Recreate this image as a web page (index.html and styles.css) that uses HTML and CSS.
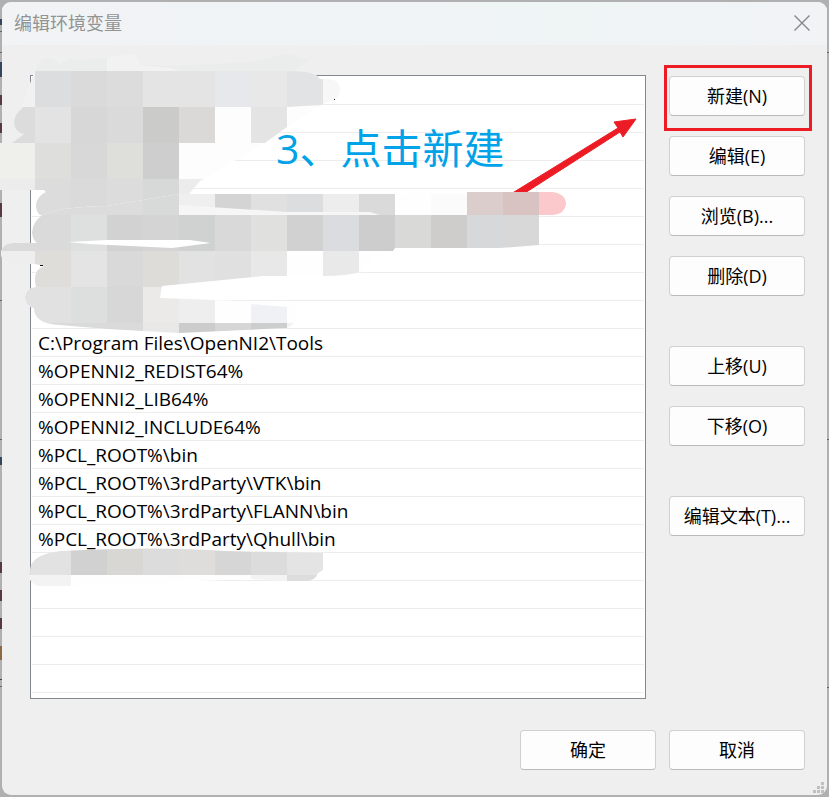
FILE: index.html
```html
<!DOCTYPE html>
<html lang="zh-CN">
<head>
    <meta charset="UTF-8">
    <meta name="viewport" content="width=device-width, initial-scale=1.0">
    <title>编辑环境变量</title>
    <link rel="stylesheet" href="styles.css">
</head>
<body>
    <div class="dialog">
        <header class="title-bar">
            <h1>编辑环境变量</h1>
            <button class="close" aria-label="关闭">
                <svg width="16" height="16" viewBox="0 0 16 16"><path d="M.5 .5 15.5 15.5M15.5 .5 .5 15.5" fill="none" stroke="#858788" stroke-width="1.4"/></svg>
            </button>
        </header>

        <main class="content">
            <ul class="path-list">
                <li></li>
                <li></li>
                <li></li>
                <li></li>
                <li></li>
                <li></li>
                <li></li>
                <li></li>
                <li></li>
                <li>C:\Program Files\OpenNI2\Tools</li>
                <li>%OPENNI2_REDIST64%</li>
                <li>%OPENNI2_LIB64%</li>
                <li>%OPENNI2_INCLUDE64%</li>
                <li>%PCL_ROOT%\bin</li>
                <li>%PCL_ROOT%\3rdParty\VTK\bin</li>
                <li>%PCL_ROOT%\3rdParty\FLANN\bin</li>
                <li>%PCL_ROOT%\3rdParty\Qhull\bin</li>
                <li></li>
                <li></li>
                <li></li>
                <li></li>
                <li></li>
            </ul>

            <div class="actions">
                <div class="group">
                    <div class="highlight"><button class="btn">新建(N)</button></div>
                    <button class="btn">编辑(E)</button>
                    <button class="btn">浏览(B)...</button>
                    <button class="btn">删除(D)</button>
                </div>
                <div class="group">
                    <button class="btn">上移(U)</button>
                    <button class="btn">下移(O)</button>
                </div>
                <div class="group">
                    <button class="btn">编辑文本(T)...</button>
                </div>
            </div>
        </main>

        <footer class="footer">
            <button class="btn">确定</button>
            <button class="btn">取消</button>
        </footer>

        <svg class="grip" width="11" height="11" viewBox="0 0 11 11" fill="#bfbfbf">
            <path d="M8 0h3v3H8zM4 4h3v3H4zM8 4h3v3H8zM0 8h3v3H0zM4 8h3v3H4zM8 8h3v3H8z"/>
        </svg>
    </div>

    <!-- marks drawn on top of the dialog -->
    <svg class="markup" width="829" height="797" viewBox="0 0 829 797">
        <defs>
            <clipPath id="blob-top">
                <path d="M35 71H290Q314 70 320 79H328Q340 80 340 90 340 99 330 101L321 105 287 127 265 143 200 181 189 194 179 215H40Q36 212 36 205 37 196 46 192L44 190H0V143H12L24 134Q14 132 14 122 14 115 23 107L32 78Z"/>
            </clipPath>
            <clipPath id="blob-mid">
                <path d="M42 215Q58 207 107 206L179 194H395L466 192H553Q566 194 566 204 565 214 553 215H539V245L500 248H395L393 251H380L362 272Q345 276 323 276H263L162 286 160 298 215 300 287 303Q297 306 297 316 296 324 287 328L179 333 107 329 60 325Q34 324 34 308 25 306 25 297 26 288 36 287 32 270 44 266L35 264H12Q1 262 1 253 2 243 14 243H37Q32 239 32 232 33 222 42 215Z"/>
            </clipPath>
            <clipPath id="blob-low">
                <path d="M31 565Q36 554 60 551 160 546 225 551L323 553V570L318 573Q315 581 306 581H287L251 579 71 586H38Q29 583 29 575Z"/>
            </clipPath>
        </defs>

        <path d="M36 71Q37 58 49 58 56 59 60 65 68 57 81 60L107 58 130 54Q139 55 140 65L170 66 251 62 287 54 310 60 293 71Z" fill="#ebecec"/>
        <path d="M107 58 130 54Q139 55 140 65L170 68 180 71H107Z" fill="#f1f2f1"/>

        <g clip-path="url(#blob-top)">
            <path d="M0 71H341V216H0z" fill="#fdfdfd"/>
            <path d="M0 71h35v36H0z" fill="#f1f1f1"/>
            <path d="M35 71h36v36H35z" fill="#dcdddf"/>
            <path d="M71 71h36v36H71z" fill="#dadada"/>
            <path d="M107 71h36v36h-36z" fill="#dcdcdc"/>
            <path d="M143 71h72v36h-72z" fill="#e4e4e4"/>
            <path d="M215 71h36v36h-36z" fill="#e6e8eb"/>
            <path d="M251 71h36v36h-36z" fill="#e8e8e8"/>
            <path d="M287 71h36v36h-36z" fill="#e2e3e5"/>
            <path d="M323 71h18v36h-18z" fill="#f7f7f7"/>
            <path d="M287 107 323 105V107z" fill="#fdfdfd"/>
            <path d="M0 107h35v36H0z" fill="#dcdcdc"/>
            <path d="M35 107h36v36H35z" fill="#e3e3e3"/>
            <path d="M71 107h36v36H71z" fill="#d7d7d7"/>
            <path d="M107 107h36v36h-36z" fill="#dadada"/>
            <path d="M143 107h36v36h-36z" fill="#cbcbc9"/>
            <path d="M179 107h36v36h-36z" fill="#dad9d7"/>
            <path d="M251 107h36v36h-36z" fill="#e4e4e4"/>
            <path d="M0 143h35v36H0z" fill="#efefec"/>
            <path d="M35 143h36v36H35z" fill="#dededc"/>
            <path d="M71 143h36v36H71z" fill="#d8d8d8"/>
            <path d="M107 143h36v36h-36z" fill="#dededb"/>
            <path d="M143 143h36v36h-36z" fill="#cecece"/>
            <path d="M0 179h35v36H0z" fill="#ececec"/>
            <path d="M35 179h36v36H35z" fill="#dcdcdc"/>
            <path d="M71 179h36v36H71z" fill="#dadada"/>
            <path d="M107 179h36v36h-36z" fill="#dcdcdc"/>
            <path d="M143 179h36v36h-36z" fill="#d6d9d8"/>
            <path d="M179 179h36v36h-36z" fill="#ececec"/>
        </g>

        <!-- end of the arrow sits below the mosaic -->
        <path d="M506 197 618 128 614 122 636 119 623 137 620 132 514 200Z" fill="#ed1c24" stroke="#ed1c24"/>

        <g clip-path="url(#blob-mid)">
            <path d="M0 190H570V335H0z" fill="#fefefe"/>
            <path d="M35 194h108v21H35z" fill="#dcdcdc"/>
            <path d="M143 194h36v21h-36z" fill="#d8dad9"/>
            <path d="M179 194h36v21h-36z" fill="#efefef"/>
            <path d="M215 194h36v21h-36z" fill="#d4d4d4"/>
            <path d="M251 194h36v21h-36z" fill="#e0e0e0"/>
            <path d="M287 194h36v21h-36z" fill="#dcdddf"/>
            <path d="M323 194h36v21h-36z" fill="#ededed"/>
            <path d="M359 194h36v21h-36z" fill="#dadada"/>
            <path d="M431 194h36v21h-36z" fill="#fbfbfb"/>
            <path d="M467 192h36v23h-36z" fill="#dbcdcc"/>
            <path d="M503 192h36v23h-36z" fill="#d9c2c2"/>
            <path d="M539 192h30v23h-30z" fill="#fbc9cb"/>
            <path d="M179 205 287 212H370L380 215H179Z" fill="#f6f6f6"/>
            <path d="M0 215h71v36H0z" fill="#dadada"/>
            <path d="M71 215h36v36H71z" fill="#dee0df"/>
            <path d="M107 215h36v36h-36z" fill="#d2d2d2"/>
            <path d="M143 215h36v36h-36z" fill="#d4d4d4"/>
            <path d="M179 215h36v36h-36z" fill="#cfd2d1"/>
            <path d="M215 215h36v36h-36z" fill="#d9d9d9"/>
            <path d="M251 215h36v36h-36z" fill="#e0e0de"/>
            <path d="M287 215h36v36h-36z" fill="#d1d1d1"/>
            <path d="M323 215h36v36h-36z" fill="#dadcdf"/>
            <path d="M359 215h36v36h-36z" fill="#cdcdcd"/>
            <path d="M395 215h36v36h-36z" fill="#d9d9d7"/>
            <path d="M431 215h36v36h-36z" fill="#cfcdcc"/>
            <path d="M467 215h36v36h-36z" fill="#d6d8da"/>
            <path d="M503 215h36v36h-36z" fill="#d8d8d8"/>
            <path d="M0 251h35v36H0z" fill="#eee"/>
            <path d="M35 251h36v36H35z" fill="#dfddda"/>
            <path d="M71 251h36v36H71z" fill="#e4e4e4"/>
            <path d="M107 251h36v36h-36z" fill="#d9d9d9"/>
            <path d="M143 251h36v36h-36z" fill="#dddcd9"/>
            <path d="M179 251h36v36h-36z" fill="#e2e2e2"/>
            <path d="M215 251h36v36h-36z" fill="#e0e0e0"/>
            <path d="M251 251h36v36h-36z" fill="#e8e8e8"/>
            <path d="M323 251h36v36h-36z" fill="#e9e9e9"/>
            <path d="M0 287h71v36H0z" fill="#e1e1e1"/>
            <path d="M71 287h36v36H71z" fill="#dddfde"/>
            <path d="M107 287h36v36h-36z" fill="#d7d7d7"/>
            <path d="M143 287h36v36h-36z" fill="#ebeae8"/>
            <path d="M179 287h36v36h-36z" fill="#eee"/>
            <path d="M251 304 287 307V323H251z" fill="#f0f1f4"/>
            <path d="M35 323h108v12H35z" fill="#dadada"/>
            <path d="M143 323h36v12h-36z" fill="#e8e8e8"/>
            <path d="M179 323h36v12h-36z" fill="#ccc"/>
            <path d="M215 323h36v12h-36z" fill="#d6d6d6"/>
            <path d="M251 323h36v12h-36z" fill="#cdcdcd"/>
            <path d="M287 323h12v12h-12z" fill="#f3f3f3"/>
            <path d="M68 242 107 240 190 240 211 243 172 248 89 244Z" fill="#fff"/>
        </g>

        <g clip-path="url(#blob-low)">
            <path d="M28 545h43v30H28z" fill="#e2e2e2"/>
            <path d="M71 545h36v30H71z" fill="#d1d1d1"/>
            <path d="M107 545h36v30h-36z" fill="#d8d7d4"/>
            <path d="M143 545h36v30h-36z" fill="#dcdcdc"/>
            <path d="M179 545h36v30h-36z" fill="#dedddb"/>
            <path d="M215 545h36v30h-36z" fill="#d6d6d6"/>
            <path d="M251 545h36v30h-36z" fill="#dcdcdc"/>
            <path d="M287 545h36v30h-36z" fill="#e4e4e4"/>
            <path d="M28 575h43v12H28z" fill="#f3f3f3"/>
            <path d="M71 575h180v12H71z" fill="#fefefe"/>
            <path d="M251 575h36v12h-36z" fill="#f3f3f3"/>
            <path d="M287 575h36v12h-36z" fill="#ddd"/>
        </g>

        <!-- bits of text left uncovered -->
        <path d="M334 99h1v1h-1zM40 265h3v1h-3z" fill="#111"/>

        <!-- slivers of the window behind -->
        <path d="M0 19h2v6H0zM0 62h2v15H0zM0 457h2v8H0zM0 679h2v1H0z" fill="#34465c"/>
        <path d="M0 95h2v10H0zM0 123h2v10H0zM0 203h2v14H0zM0 562h2v11H0zM0 590h2v11H0zM0 618h2v11H0z" fill="#553b40"/>
        <path d="M0 646h2v14H0z" fill="#8b6a45"/>
        <path d="M0 31h2v1H0zM0 52h2v1H0zM0 300h2v1H0zM0 439h2v1H0zM0 686h2v1H0zM827 52h2v1h-2zM827 439h2v1h-2zM827 687h2v1h-2z" fill="#666"/>

        <text class="note" x="276" y="164">3、点击新建</text>
    </svg>
</body>
</html>
```
FILE: styles.css
```css
* {
    box-sizing: border-box;
}
body {
    position: relative;
    margin: 0;
    padding: 2px;
    min-height: 100vh;
    background-color: #b0b0b0;
    font-family: "Open Sans", "Noto Sans CJK SC", sans-serif;
    font-size: 18px;
    color: #000;
}
.dialog {
    position: relative;
    min-height: calc(100vh - 4px);
    background: #efefef;
    border-radius: 9px;
    overflow: hidden;
}
.title-bar {
    display: flex;
    align-items: center;
    justify-content: space-between;
    height: 43px;
    padding: 0 17px 2px 12px;
    background: linear-gradient(90deg, #f1f3f5, #eff4f5 70%, #f1f3f5);
}
.title-bar h1 {
    margin: 0;
    font-size: 18px;
    font-weight: normal;
    line-height: 24px;
    color: #919394;
}
.close {
    display: flex;
    padding: 0;
    border: 0;
    background: none;
}
.content {
    display: flex;
    align-items: flex-start;
    gap: 23px;
    padding: 30px 22px 0 28px;
}
.path-list {
    flex: 1;
    margin: 0;
    padding: 1px 1px 5px;
    list-style: none;
    background: #fff;
    border: 1px solid #828790;
}
.path-list li {
    height: 28px;
    padding-left: 6px;
    border-bottom: 1px solid #ededed;
    font-size: 19px;
    line-height: 28px;
    white-space: nowrap;
}
.actions {
    display: flex;
    flex-direction: column;
    gap: 50px;
    padding-top: 1px;
}
.group {
    display: flex;
    flex-direction: column;
    gap: 20px;
}
.btn {
    display: block;
    width: 136px;
    height: 40px;
    padding: 0;
    background: #fdfdfd;
    border: 1px solid #d0d0d0;
    border-bottom-color: #bababa;
    border-radius: 4px;
    font-family: inherit;
    font-size: 18px;
    line-height: 24px;
    color: #000;
}
.highlight {
    position: relative;
}
.highlight::after {
    content: "";
    position: absolute;
    inset: -11px -7px -15px -5px;
    border: 3px solid #ed1c24;
    pointer-events: none;
}
.footer {
    display: flex;
    justify-content: flex-end;
    gap: 13px;
    padding: 31px 22px 25px;
}
.grip {
    position: absolute;
    right: 3px;
    bottom: 2px;
}
.markup {
    position: absolute;
    top: 0;
    left: 0;
    pointer-events: none;
}
.note {
    font-size: 41px;
    fill: #00a2e8;
}
```
